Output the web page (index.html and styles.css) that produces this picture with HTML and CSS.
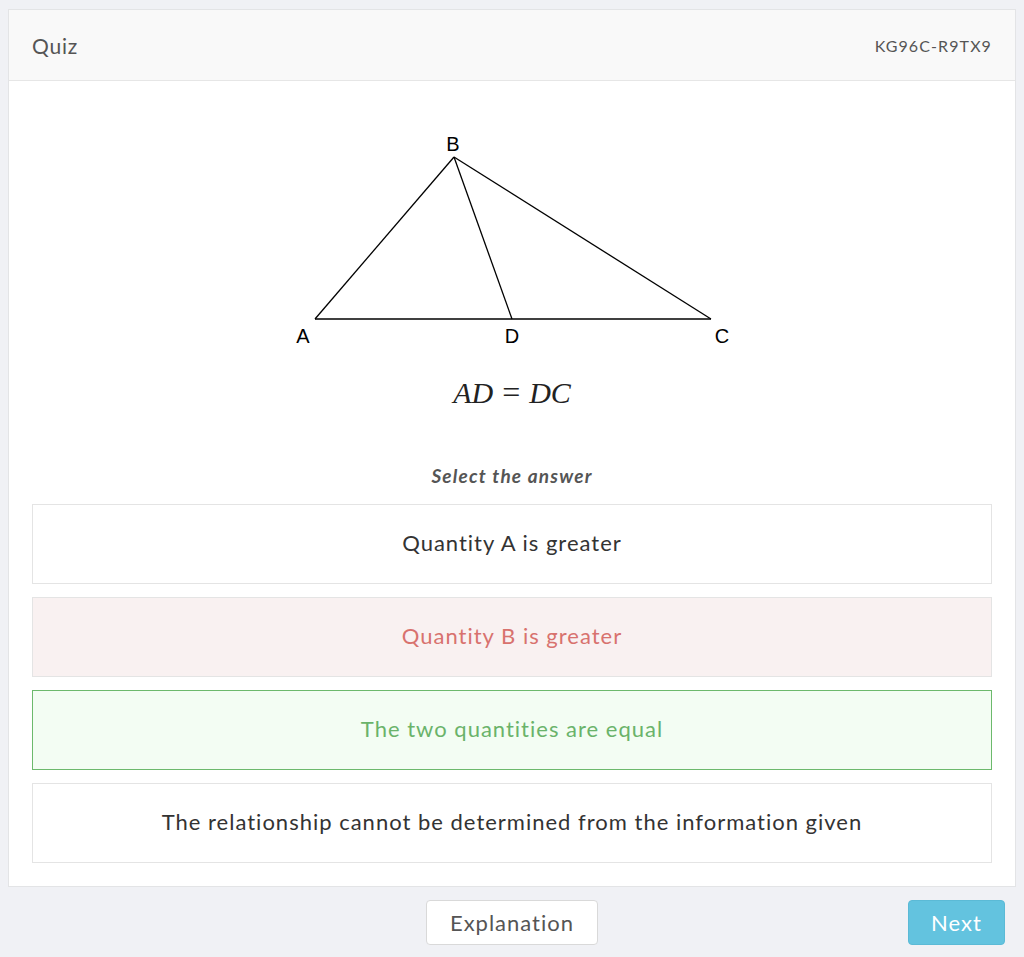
FILE: index.html
```html
<!DOCTYPE html>
<html>
<head>
<meta charset="utf-8">
<link rel="stylesheet" href="styles.css">
</head>
<body>
<div class="card">
  <div class="card-header">
    <span class="title">Quiz</span>
    <span class="code">KG96C-R9TX9</span>
  </div>
  <div class="card-body">
    <svg class="figure" width="460" height="230" viewBox="0 0 460 230">
      <g stroke="#000" stroke-width="1.3" fill="none">
        <line x1="33" y1="199" x2="429" y2="199"/>
        <line x1="33" y1="199" x2="172" y2="37"/>
        <line x1="172" y1="37" x2="429" y2="199"/>
        <line x1="172" y1="37" x2="230" y2="199"/>
      </g>
      <g font-family="Liberation Sans, Arial, sans-serif" font-size="20" fill="#000" text-anchor="middle">
        <text x="171" y="31">B</text>
        <text x="21" y="223">A</text>
        <text x="230" y="223">D</text>
        <text x="440" y="223">C</text>
      </g>
    </svg>
    <div class="formula"><i>AD</i><span class="eq">=</span><i>DC</i></div>
    <div class="prompt">Select the answer</div>
    <div class="options">
      <div class="option">Quantity A is greater</div>
      <div class="option wrong">Quantity B is greater</div>
      <div class="option right">The two quantities are equal</div>
      <div class="option">The relationship cannot be determined from the information given</div>
    </div>
  </div>
</div>
<div class="actions">
  <span></span>
  <button class="btn btn-default">Explanation</button>
  <button class="btn btn-next">Next</button>
</div>
</body>
</html>
```
FILE: styles.css
```css
body {
  margin: 0;
  background: #f0f1f5;
  font-family: Lato, "Open Sans", sans-serif;
  color: #333;
}
.card {
  margin: 9px 8px 0 8px;
  background: #fff;
  border: 1px solid #e3e4e6;
}
.card-header {
  height: 70px;
  border-bottom: 1px solid #e6e6e6;
  background: #f9f9f9;
  display: flex;
  align-items: center;
  justify-content: space-between;
  padding: 0 23px;
}
.title {
  font-size: 21px;
  color: #555;
  letter-spacing: 0.8px;
}
.code {
  font-size: 16px;
  color: #555;
  letter-spacing: 1.1px;
}
.card-body {
  padding: 0 23px 23px;
}
.figure {
  display: block;
  margin: 39px auto 0;
}
.formula {
  text-align: center;
  font-family: "Liberation Serif", "Times New Roman", serif;
  font-size: 30px;
  color: #222;
  line-height: 32px;
  margin-top: 26px;
}
.formula i {
  font-style: italic;
}
.eq {
  margin: 0 9px;
  font-size: 32px;
}
.prompt {
  text-align: center;
  font-style: italic;
  font-weight: bold;
  font-size: 19px;
  letter-spacing: 1.2px;
  color: #555;
  margin-top: 56px;
  line-height: 22px;
}
.options {
  margin-top: 17px;
  display: flex;
  flex-direction: column;
  gap: 13px;
}
.option {
  height: 78px;
  border: 1px solid #e4e4e4;
  display: flex;
  align-items: center;
  justify-content: center;
  font-size: 22px;
  letter-spacing: 1px;
  color: #333;
  background: #fff;
  padding-bottom: 3px;
  box-sizing: content-box;
  height: 75px;
}
.option.wrong {
  background: #f9f1f1;
  color: #d8726e;
}
.option.right {
  background: #f3fdf3;
  border-color: #6cb96c;
  color: #6ab36a;
}
.actions {
  display: grid;
  grid-template-columns: 1fr auto 1fr;
  align-items: start;
  margin-top: 13px;
}
.btn {
  height: 45px;
  border-radius: 4px;
  font-family: Lato, "Open Sans", sans-serif;
  font-size: 22px;
  letter-spacing: 1px;
  padding: 0;
  cursor: pointer;
}
.btn-default {
  width: 172px;
  background: #fff;
  border: 1px solid #d9d9d9;
  color: #555;
}
.btn-next {
  justify-self: end;
  margin-right: 19px;
  width: 97px;
  background: #63c3df;
  border: 1px solid #5bbad6;
  color: #fff;
}
```
